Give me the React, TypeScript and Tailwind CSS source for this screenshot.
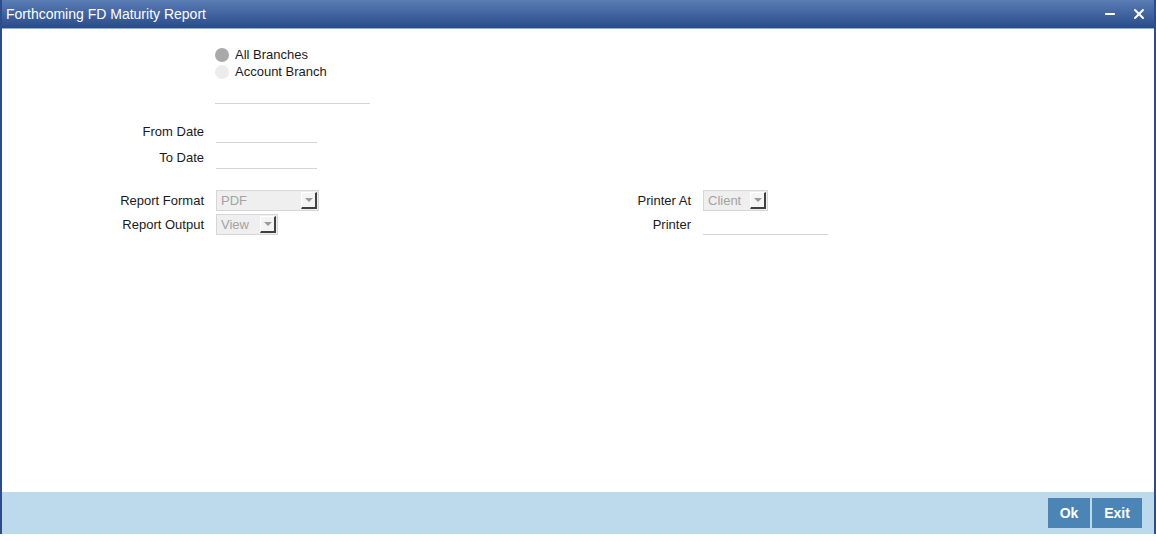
import { Minus, X } from "lucide-react";

const font = { fontFamily: '"Liberation Sans", Arial, sans-serif' };

function Line({ w }: { w: string }) {
  return <div className={`${w} h-[26px] border-b border-[#d4d4d4]`} />;
}

function Select({ value, w }: { value: string; w: string }) {
  return (
    <div className={`${w} h-[21px] flex items-center bg-[#efefef] border border-[#d6d6d6] text-[13px] text-[#a3a3a3]`}>
      <span className="flex-1 pl-[4px] leading-none">{value}</span>
      <span className="w-[16px] h-[17px] mr-[1px] flex items-center justify-center bg-[#f4f4f4] border-t border-l border-white border-r-2 border-b-2 border-r-[#404040] border-b-[#404040]">
        <span className="w-0 h-0 border-l-[4px] border-r-[4px] border-t-[4px] border-l-transparent border-r-transparent border-t-[#9a9a9a]" />
      </span>
    </div>
  );
}

function Radio({ label, on }: { label: string; on?: boolean }) {
  return (
    <div className="flex items-center h-[17px] gap-[6px]">
      <span className={`w-[14px] h-[14px] rounded-full ${on ? "bg-[#a9a9a9]" : "bg-[#ececec]"}`} />
      <span>{label}</span>
    </div>
  );
}

export default function App() {
  return (
    <div className="w-[1156px] h-[541px] bg-white" style={font}>
      <div className="h-[534px] flex flex-col border-x-2 border-[#2c4d8b] text-[13px] text-[#1a1a1a]">
        <div className="h-[29px] shrink-0 flex items-center justify-between pl-[4px] pr-[5px] bg-gradient-to-b from-[#5a7db5] to-[#2a4b8a] border-b border-[#8fb0d8]">
          <span className="text-[14px] text-white">Forthcoming FD Maturity Report</span>
          <div className="flex items-center gap-[14px] pr-[2px] text-white">
            <Minus size={14} strokeWidth={3.5} />
            <X size={16} strokeWidth={3} />
          </div>
        </div>

        <div className="flex-1 pt-[17px]">
          <div className="pl-[213px] flex flex-col">
            <Radio label="All Branches" on />
            <Radio label="Account Branch" />
            <div className="w-[155px] h-[24px] border-b border-[#d4d4d4]" />
          </div>

          <div className="mt-[13px] grid grid-cols-[202px_auto] gap-x-[12px] items-end w-fit">
            <span className="text-right pb-[2px]">From Date</span>
            <Line w="w-[101px]" />
            <span className="text-right pb-[2px]">To Date</span>
            <Line w="w-[101px]" />
          </div>

          <div className="mt-[21px] flex">
            <div className="grid grid-cols-[202px_auto] gap-x-[12px] gap-y-[3px] items-center w-[488px] content-start">
              <span className="text-right">Report Format</span>
              <Select value="PDF" w="w-[103px]" />
              <span className="text-right">Report Output</span>
              <Select value="View" w="w-[62px]" />
            </div>
            <div className="grid grid-cols-[201px_auto] gap-x-[12px] gap-y-[3px] items-center content-start">
              <span className="text-right">Printer At</span>
              <Select value="Client" w="w-[65px]" />
              <span className="text-right">Printer</span>
              <div className="w-[125px] h-[21px] border-b border-[#d4d4d4]" />
            </div>
          </div>
        </div>

        <div className="h-[42px] shrink-0 bg-[#bdd9ec] flex items-center justify-end pr-[12px] gap-[2px]">
          <button className="w-[42px] h-[30px] bg-[#4a85b5] text-white text-[14px] font-bold">Ok</button>
          <button className="w-[50px] h-[30px] bg-[#4a85b5] text-white text-[14px] font-bold">Exit</button>
        </div>
      </div>
    </div>
  );
}
